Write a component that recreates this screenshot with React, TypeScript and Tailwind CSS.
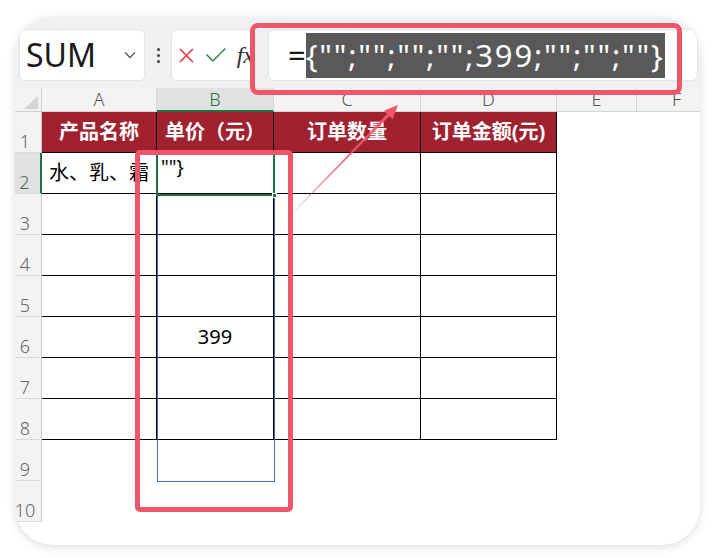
import React from 'react'

const cjk = { fontFamily: '"Noto Sans", "Noto Sans CJK SC", sans-serif' }

// widths for the grid columns (row header first)
const cols = [
  { key: 'A', cls: 'w-[115px]' },
  { key: 'B', cls: 'w-[117px]' },
  { key: 'C', cls: 'w-[147px]' },
  { key: 'D', cls: 'w-[136px]' },
  { key: 'E', cls: 'w-[80px]' },
  { key: 'F', cls: 'w-[80px]' },
]

const headers = ['产品名称', '单价（元）', '订单数量', '订单金额(元)']

function NameBox() {
  return (
    <div className="w-[126px] h-[52px] shrink-0 rounded-[6px] bg-white border border-[#e3e3e3] flex items-center justify-between pl-[6px] pr-[8px]">
      <span className="text-[32px] leading-none text-[#1a1a1a]">SUM</span>
      <svg width="12" height="8" viewBox="0 0 12 8">
        <path d="M1 1.5 L6 6.5 L11 1.5" fill="none" stroke="#555" strokeWidth="1.3" />
      </svg>
    </div>
  )
}

function FxBox() {
  return (
    <div className="w-[84px] h-[52px] shrink-0 rounded-[6px] bg-white border border-[#e3e3e3] flex items-center pl-[6px] overflow-hidden">
      <svg width="17" height="17" viewBox="0 0 17 17">
        <path d="M2 2 L15 15 M15 2 L2 15" stroke="#e0353d" strokeWidth="1.6" fill="none" />
      </svg>
      <svg width="22" height="16" viewBox="0 0 22 16" className="ml-[10px]">
        <path d="M1.5 7.5 L8 14 L20.5 1.5" stroke="#2e8b47" strokeWidth="1.6" fill="none" />
      </svg>
      <span className="ml-[10px] text-[24px] italic leading-none text-[#333]" style={{ fontFamily: '"Liberation Serif", serif' }}>
        fx
      </span>
    </div>
  )
}

function FormulaBox() {
  return (
    <div className="ml-[13px] w-[430px] h-[52px] shrink-0 rounded-[6px] bg-white border border-[#e3e3e3] flex items-center pl-[19px]">
      <span className="text-[31px] leading-none text-[#1a1a1a]">=</span>
      <span className="h-[45px] leading-[45px] bg-[#595959] text-white text-[31px] tracking-[1.8px]">
        {'{"";"";"";"";399;"";"";""}'}
      </span>
    </div>
  )
}

function ColumnHeader() {
  return (
    <div className="flex h-[24px]">
      <div className="w-[27px] shrink-0 bg-[#f3f3f3] border-r border-b border-[#cfcfcf] relative">
        <svg width="14" height="13" viewBox="0 0 14 13" className="absolute right-[3px] bottom-[2px]">
          <path d="M14 0 L14 13 L0 13 Z" fill="#d4d4d4" />
        </svg>
      </div>
      {cols.map((c) => (
        <div
          key={c.key}
          className={
            c.key === 'B'
              ? `${c.cls} shrink-0 flex items-center justify-center bg-[#e1e1e1] border-r border-[#d4d4d4] border-b-2 border-b-[#1e7145] text-[18px] font-light text-[#1e7145]`
              : `${c.cls} shrink-0 flex items-center justify-center bg-[#f3f3f3] border-r border-b border-[#d4d4d4] text-[18px] font-light text-[#555]`
          }
        >
          {c.key}
        </div>
      ))}
    </div>
  )
}

function Row({ n }: { n: number }) {
  const inTable = n <= 8
  const active = n === 2
  return (
    <div className="flex h-[41px]">
      <div
        className={
          active
            ? 'w-[27px] shrink-0 bg-[#e1e1e1] border-b border-[#dadada] border-r-2 border-r-[#1e7145] flex items-end justify-center pb-[2px] pr-[6px] text-[18px] font-light leading-none text-[#4f6b58] overflow-visible whitespace-nowrap'
            : 'w-[27px] shrink-0 bg-[#f3f3f3] border-b border-[#dadada] border-r border-r-[#c8c8c8] flex items-end justify-center pb-[2px] pr-[6px] text-[18px] font-light leading-none text-[#666] overflow-visible whitespace-nowrap'
        }
      >
        {n}
      </div>
      {cols.map((c, i) => {
        const tableCell = inTable && i < 4
        if (n === 1 && i < 4) {
          return (
            <div
              key={c.key}
              className={`${c.cls} shrink-0 bg-[#a02231] border-r border-b border-black flex items-center justify-center text-white text-[20px] font-bold whitespace-nowrap`}
            >
              {headers[i]}
            </div>
          )
        }
        let content: React.ReactNode = null
        if (n === 2 && c.key === 'A') content = <span className="pl-[7px] text-[20px] text-black whitespace-nowrap">水、乳、霜</span>
        if (n === 2 && c.key === 'B')
          content = <span className="self-start pl-[4px] pt-[2px] text-[19px] leading-[24px] text-black">{'""}'}</span>
        if (n === 6 && c.key === 'B') content = <span className="w-full text-center text-[20px] text-black">399</span>
        return (
          <div
            key={c.key}
            className={
              tableCell
                ? `${c.cls} shrink-0 border-r border-b border-black flex items-center overflow-hidden`
                : `${c.cls} shrink-0 flex items-center overflow-hidden`
            }
          >
            {content}
          </div>
        )
      })}
    </div>
  )
}

function Arrow() {
  return (
    <svg className="absolute left-0 top-0 pointer-events-none" width="685" height="528" viewBox="0 0 685 528">
      <defs>
        <linearGradient id="arrowFade" x1="263" y1="211" x2="383" y2="88" gradientUnits="userSpaceOnUse">
          <stop offset="0" stopColor="#f0566a" stopOpacity="0" />
          <stop offset="0.3" stopColor="#f0566a" stopOpacity="0.75" />
          <stop offset="1" stopColor="#f0566a" stopOpacity="1" />
        </linearGradient>
      </defs>
      <polygon points="263,211 374.4,99.1 372.1,96.9" fill="url(#arrowFade)" />
      <polygon points="383,88 377.5,102.2 368.9,93.8" fill="#f0566a" />
    </svg>
  )
}

export default function App() {
  return (
    <div className="w-[714px] h-[558px] bg-white pt-[17px] pl-[15px]" style={cjk}>
      <div className="relative w-[685px] h-[528px] rounded-[38px] bg-white overflow-hidden shadow-[0_2px_10px_rgba(0,0,0,0.14)]">
        <div className="flex items-start pt-[12px] pl-[4px] h-[71px] bg-[#eef0f1]">
          <NameBox />
          <div className="w-[26px] h-[52px] shrink-0 flex flex-col items-center justify-center gap-[3px]">
            <div className="w-[3px] h-[3px] rounded-full bg-[#444]" />
            <div className="w-[3px] h-[3px] rounded-full bg-[#444]" />
            <div className="w-[3px] h-[3px] rounded-full bg-[#444]" />
          </div>
          <FxBox />
          <FormulaBox />
        </div>
        <ColumnHeader />
        {[1, 2, 3, 4, 5, 6, 7, 8, 9, 10].map((n) => (
          <Row key={n} n={n} />
        ))}

        {/* selection B2:B9 */}
        <div className="absolute left-[142px] top-[136px] w-[118px] h-[329px] border border-[#3f6cb8] pointer-events-none" />
        {/* active cell B2 */}
        <div className="absolute left-[141px] top-[135px] w-[119px] h-[44px] border-2 border-[#1e7145] pointer-events-none" />
        <div className="absolute left-[257px] top-[176px] w-[5px] h-[5px] bg-[#1e7145] border border-white pointer-events-none" />

        {/* red call-out boxes */}
        <div className="absolute left-[235px] top-[6px] w-[432px] h-[72px] rounded-[8px] border-[5px] border-[#f0566a] pointer-events-none" />
        <div className="absolute left-[120px] top-[133px] w-[158px] h-[362px] rounded-[5px] border-[5px] border-[#f0566a] pointer-events-none" />
        <Arrow />
      </div>
    </div>
  )
}
